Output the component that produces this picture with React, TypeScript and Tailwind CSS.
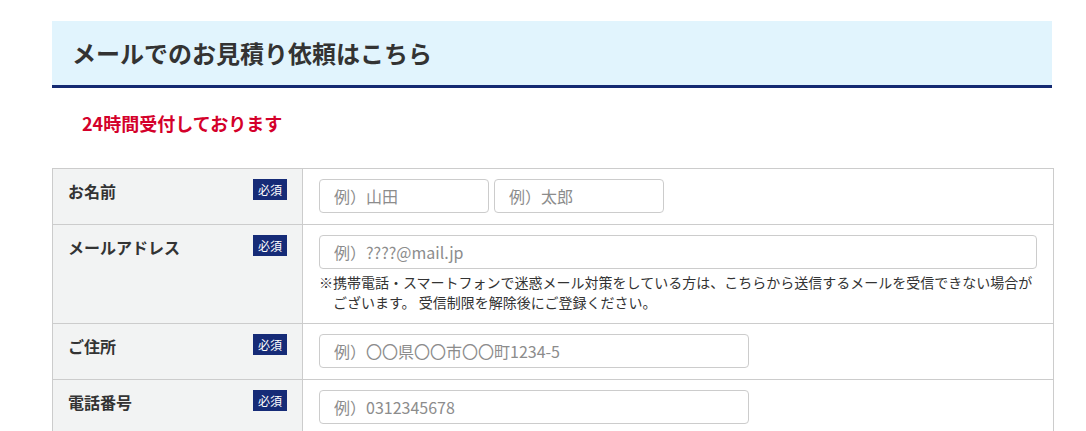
import React from 'react';

const font = { fontFamily: '"Noto Sans CJK JP", "Noto Sans", sans-serif' };

function Badge() {
  return (
    <span className="flex h-[21px] w-[34px] shrink-0 items-center justify-center bg-[#162b77] text-[12px] leading-none text-white">
      必須
    </span>
  );
}

function Row({ label, children }: { label: string; children: React.ReactNode }) {
  return (
    <div className="flex border-t border-[#cccccc] first:border-t-0">
      <div className="flex w-[250px] shrink-0 items-start justify-between border-r border-[#cccccc] bg-[#f2f3f3] pb-[11px] pl-[15px] pr-[15px] pt-[10px]">
        <span className="text-[16px] font-bold leading-[24px] text-[#333333]">{label}</span>
        <Badge />
      </div>
      <div className="flex-1 px-[16px] pb-[11px] pt-[10px]">{children}</div>
    </div>
  );
}

function Field({ placeholder, className }: { placeholder: string; className: string }) {
  return (
    <input
      type="text"
      placeholder={placeholder}
      className={`h-[34px] rounded-[4px] border border-[#cccccc] bg-white px-[14px] text-[16px] text-[#333333] outline-none placeholder:text-[#8c8c8c] ${className}`}
      style={font}
    />
  );
}

export default function App() {
  return (
    <div className="min-h-[431px] bg-white" style={font}>
      <div className="ml-[52px] w-[1000px] pt-[21px]">
        <div className="flex h-[67px] items-center border-b-[3px] border-[#142a72] bg-[#e1f4fd] pl-[20px]">
          <h2 className="text-[24px] font-bold leading-none text-[#333333]">メールでのお見積り依頼はこちら</h2>
        </div>

        <p className="mb-[31px] mt-[22px] pl-[30px] text-[18px] font-bold leading-[27px] text-[#d4002a]">
          24時間受付しております
        </p>

        <div className="w-[1002px] border border-[#cccccc]">
          <Row label="お名前">
            <div className="flex gap-[5px]">
              <Field placeholder="例）山田" className="w-[170px]" />
              <Field placeholder="例）太郎" className="w-[170px]" />
            </div>
          </Row>
          <Row label="メールアドレス">
            <Field placeholder="例）????@mail.jp" className="w-full" />
            <p className="mt-[3px] pl-[14px] -indent-[14px] text-[14px] leading-[20px] text-[#333333]">
              ※携帯電話・スマートフォンで迷惑メール対策をしている方は、こちらから送信するメールを受信できない場合がございます。 受信制限を解除後にご登録ください。
            </p>
          </Row>
          <Row label="ご住所">
            <Field placeholder="例）〇〇県〇〇市〇〇町1234-5" className="w-[430px]" />
          </Row>
          <Row label="電話番号">
            <Field placeholder="例）0312345678" className="w-[430px]" />
          </Row>
        </div>
      </div>
    </div>
  );
}
